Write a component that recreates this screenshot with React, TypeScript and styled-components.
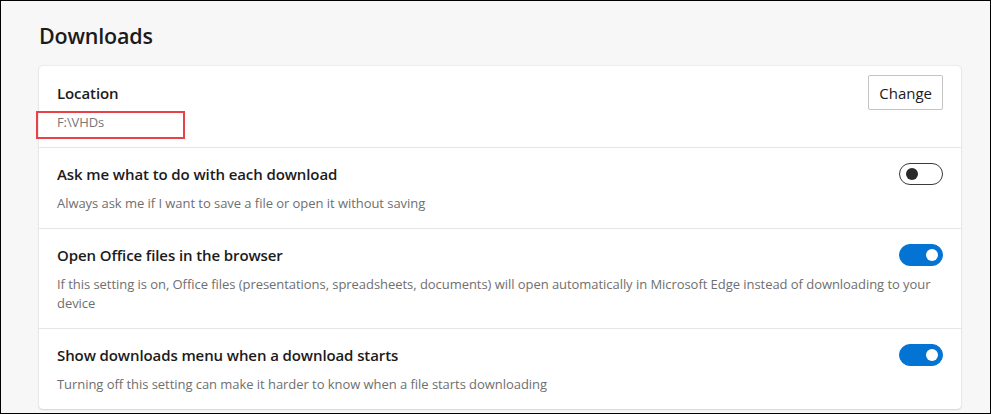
import React from 'react';
import styled, {createGlobalStyle} from "styled-components";

const GlobalStyle = createGlobalStyle`
  * {
    box-sizing: border-box;
  }
  body {
    margin: 0;
    background: #f7f7f7;
    font-family: "Open Sans", "Noto Sans", Arial, sans-serif;
    color: #1b1b1b;
  }
`

const Frame = styled.div`
  width: 991px;
  height: 414px;
  border: 1px solid #000;
  background: #f7f7f7;
  padding: 19px 29px 0 38px;
  overflow: hidden;
`
const Title = styled.h1`
  margin: 0 0 14px;
  font-size: 21.5px;
  line-height: 32px;
  font-weight: 600;
  color: #1b1b1b;
  letter-spacing: -0.2px;
`
const Card = styled.section`
  background: #fff;
  border-radius: 4px;
  box-shadow: 0 0 2px rgb(0 0 0 / 14%), 0 1px 2px rgb(0 0 0 / 10%);
  display: flex;
  flex-direction: column;
`
const Row = styled.div<{ $compact?: boolean }>`
  display: flex;
  flex-direction: column;
  gap: ${p => p.$compact ? '3px' : '9px'};
  padding: ${p => p.$compact ? '9px 18px 15px' : '15px 18px 15px'};
  border-bottom: 1px solid #e6e6e6;

  &:last-child {
    border-bottom: none;
  }
`
const RowHead = styled.div`
  display: flex;
  align-items: center;
  justify-content: space-between;
  min-height: 22px;
`
const Label = styled.span`
  font-size: 15px;
  font-weight: 600;
  color: #1b1b1b;
  letter-spacing: -0.1px;
`
const Description = styled.p`
  margin: 0;
  font-size: 13px;
  line-height: 19px;
  color: #6f6f6f;
  letter-spacing: -0.05px;
`
const PathWrap = styled.div`
  position: relative;
  font-size: 13px;
  line-height: 19px;
  color: #767676;
  letter-spacing: -0.1px;
`
const Highlight = styled.span`
  position: absolute;
  left: -21px;
  top: -2px;
  width: 149px;
  height: 28px;
  border: 2px solid #e8414a;
  pointer-events: none;
`
const Button = styled.button`
  height: 35px;
  padding: 0 10px;
  background: #fff;
  border: 1px solid #c4c4c4;
  border-radius: 2px;
  font-family: inherit;
  font-size: 15px;
  color: #1b1b1b;
  letter-spacing: 0;
`
const Toggle = styled.span<{ $on?: boolean }>`
  position: relative;
  display: inline-block;
  width: 44px;
  height: 22px;
  border-radius: 11px;
  background: ${p => p.$on ? '#0474d4' : '#fff'};
  border: 1px solid ${p => p.$on ? '#0474d4' : '#3a3a3a'};

  &::after {
    content: "";
    position: absolute;
    top: 4px;
    left: ${p => p.$on ? '26px' : '6px'};
    width: 12px;
    height: 12px;
    border-radius: 50%;
    background: ${p => p.$on ? '#fff' : '#2a2a2a'};
  }
`

type Setting = {
    title: string
    text: string
    on: boolean
}

const settings: Setting[] = [
    {
        title: 'Ask me what to do with each download',
        text: 'Always ask me if I want to save a file or open it without saving',
        on: false,
    },
    {
        title: 'Open Office files in the browser',
        text: 'If this setting is on, Office files (presentations, spreadsheets, documents) will open automatically in Microsoft Edge instead of downloading to your device',
        on: true,
    },
    {
        title: 'Show downloads menu when a download starts',
        text: 'Turning off this setting can make it harder to know when a file starts downloading',
        on: true,
    },
]

const App: React.FC = () => {
    return (
        <Frame>
            <GlobalStyle/>
            <Title>Downloads</Title>
            <Card>
                <Row $compact>
                    <RowHead>
                        <Label>Location</Label>
                        <Button>Change</Button>
                    </RowHead>
                    <PathWrap>
                        F:\VHDs
                        <Highlight/>
                    </PathWrap>
                </Row>
                {settings.map(item => (
                    <Row key={item.title}>
                        <RowHead>
                            <Label>{item.title}</Label>
                            <Toggle $on={item.on}/>
                        </RowHead>
                        <Description>{item.text}</Description>
                    </Row>
                ))}
            </Card>
        </Frame>
    );
};
export default App;
